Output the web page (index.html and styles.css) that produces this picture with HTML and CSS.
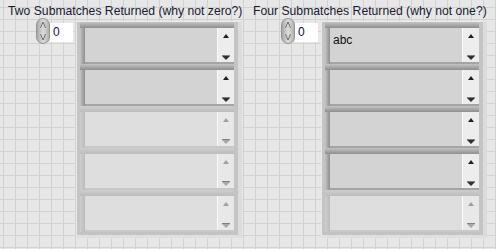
FILE: index.html
```html
<!DOCTYPE html>
<html>
<head>
<meta charset="utf-8">
<link rel="stylesheet" href="styles.css">
</head>
<body>
<div class="panel">
  <div class="group g1">
    <div class="label">Two Submatches Returned (why not zero?)</div>
    <div class="row">
      <div class="index">
        <div class="spin">
          <svg width="14" height="26" viewBox="0 0 14 26"><path d="M4.5 10.5 L7 4.5 L9.5 10.5" fill="none" stroke="#f6f6f6" stroke-width="1"/><path d="M4.5 15.5 L7 21.5 L9.5 15.5" fill="none" stroke="#f6f6f6" stroke-width="1"/><path d="M4.5 10 L7 4 L9.5 10" fill="none" stroke="#666" stroke-width="1"/><path d="M4.5 16 L7 22 L9.5 16" fill="none" stroke="#666" stroke-width="1"/></svg>
        </div>
        <div class="val">0</div>
      </div>
      <div class="arr">
        <div class="el on"><div class="fld"><div class="txt"></div><div class="sb"><i class="up"></i><i class="dn"></i></div></div></div>
        <div class="el on"><div class="fld"><div class="txt"></div><div class="sb"><i class="up"></i><i class="dn"></i></div></div></div>
        <div class="el off"><div class="fld"><div class="txt"></div><div class="sb"><i class="up"></i><i class="dn"></i></div></div></div>
        <div class="el off"><div class="fld"><div class="txt"></div><div class="sb"><i class="up"></i><i class="dn"></i></div></div></div>
        <div class="el off"><div class="fld"><div class="txt"></div><div class="sb"><i class="up"></i><i class="dn"></i></div></div></div>
      </div>
    </div>
  </div>
  <div class="group g2">
    <div class="label">Four Submatches Returned (why not one?)</div>
    <div class="row">
      <div class="index">
        <div class="spin">
          <svg width="14" height="26" viewBox="0 0 14 26"><path d="M4.5 10.5 L7 4.5 L9.5 10.5" fill="none" stroke="#f6f6f6" stroke-width="1"/><path d="M4.5 15.5 L7 21.5 L9.5 15.5" fill="none" stroke="#f6f6f6" stroke-width="1"/><path d="M4.5 10 L7 4 L9.5 10" fill="none" stroke="#666" stroke-width="1"/><path d="M4.5 16 L7 22 L9.5 16" fill="none" stroke="#666" stroke-width="1"/></svg>
        </div>
        <div class="val">0</div>
      </div>
      <div class="arr">
        <div class="el on"><div class="fld"><div class="txt">abc</div><div class="sb"><i class="up"></i><i class="dn"></i></div></div></div>
        <div class="el on"><div class="fld"><div class="txt"></div><div class="sb"><i class="up"></i><i class="dn"></i></div></div></div>
        <div class="el on"><div class="fld"><div class="txt"></div><div class="sb"><i class="up"></i><i class="dn"></i></div></div></div>
        <div class="el on"><div class="fld"><div class="txt"></div><div class="sb"><i class="up"></i><i class="dn"></i></div></div></div>
        <div class="el off"><div class="fld"><div class="txt"></div><div class="sb"><i class="up"></i><i class="dn"></i></div></div></div>
      </div>
    </div>
  </div>
</div>
</body>
</html>
```
FILE: styles.css
```css
html, body {
  margin: 0;
  height: 100%;
}
body {
  background-color: #e7e7e7;
  background-image:
    linear-gradient(to right, #d2d2d2 1px, transparent 1px),
    linear-gradient(to bottom, #d2d2d2 1px, transparent 1px);
  background-size: 12px 12px;
  background-position: 3px 7px;
  font-family: "Liberation Sans", Arial, sans-serif;
  font-size: 12px;
  color: #1a1a30;
}
.panel {
  display: flex;
  padding-top: 5px;
}
.g1 { margin-left: 8px; width: 245px; }
.label {
  height: 13px;
  line-height: 13px;
  font-size: 12.2px;
  white-space: nowrap;
}
.row {
  display: flex;
  align-items: flex-start;
  gap: 2px;
  padding-left: 28px;
}
.index {
  display: flex;
  align-items: flex-start;
  width: 38px;
}
.spin {
  width: 14px;
  height: 26px;
  box-sizing: border-box;
  border: 1px solid #949494;
  border-radius: 7px;
  background: linear-gradient(to right, #a8a8a8, #dcdcdc 50%, #b2b2b2);
  display: flex;
}
.spin svg { margin: -1px; }
.val {
  margin-top: 5px;
  width: 23px;
  height: 19px;
  box-sizing: border-box;
  background: #fff;
  padding-left: 3px;
  font-size: 12px;
  line-height: 19px;
  color: #10103a;
}
.arr {
  margin-top: 3px;
  width: 166px;
  box-sizing: border-box;
  border-top: 1px solid #eaeaea;
  border-left: 1px solid #eaeaea;
  border-right: 4px solid #dcdcdc;
  border-bottom: 3px solid #e0e0e0;
  padding: 0 4px 3px 3px;
  background: #c4c4c4;
}
.el {
  height: 42px;
  box-sizing: border-box;
  padding: 6px 0 0 5px;
}
.el.on {
  background:
    linear-gradient(to bottom, #c4c4c4, #8e8e8e) top left / 100% 6px no-repeat,
    linear-gradient(to right, #c4c4c4, #8e8e8e) top left / 5px 100% no-repeat,
    #a4a4a4;
}
.el.off {
  background:
    linear-gradient(to bottom, #cecece, #bcbcbc) top left / 100% 6px no-repeat,
    linear-gradient(to right, #cecece, #bcbcbc) top left / 5px 100% no-repeat,
    #c8c8c8;
}
.fld {
  height: 34px;
  display: flex;
}
.on .fld { background: #d3d3d3; }
.off .fld { background: #dedede; }
.txt {
  flex: 1;
  padding: 5px 0 0 3px;
  font-size: 12px;
  line-height: 14px;
  color: #101010;
}
.sb {
  width: 17px;
  display: flex;
  flex-direction: column;
  justify-content: space-between;
  align-items: center;
  padding: 6px 0 2px;
  box-sizing: border-box;
  border-left: 1px solid #fafafa;
}
.on .sb { background: #ededed; }
.off .sb { background: #e8e8e8; }
.up {
  display: block;
  width: 0;
  height: 0;
  border-left: 3px solid transparent;
  border-right: 3px solid transparent;
  border-bottom: 4px solid #202020;
}
.dn {
  display: block;
  width: 0;
  height: 0;
  border-left: 4px solid transparent;
  border-right: 4px solid transparent;
  border-top: 4px solid #303030;
  box-shadow: 0 -1px 0 0 #808080;
}
.off .up { border-bottom-color: #a0a0a0; }
.off .dn { border-top-color: #a8a8a8; }
```
